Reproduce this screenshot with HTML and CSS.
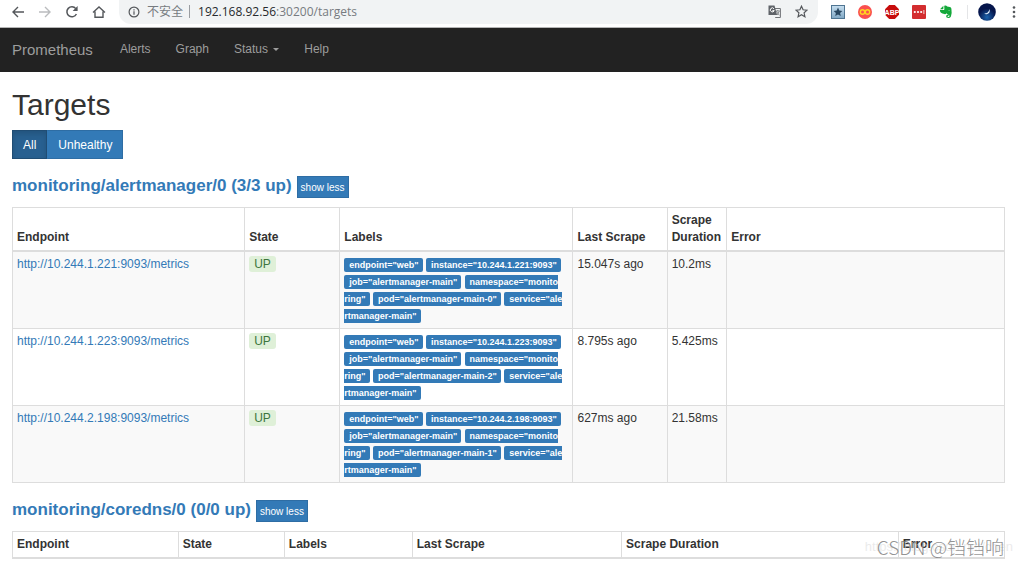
FILE: index.html
```html
<!DOCTYPE html>
<html lang="en">
<head>
<meta charset="utf-8">
<title>Prometheus Targets</title>
<link rel="stylesheet" href="styles.css">
</head>
<body>
<header class="browser">
  <div class="nav-buttons">
    <button class="icon-btn" aria-label="Back"><svg width="14" height="14" viewBox="0 0 14 14" fill="none" stroke="#54575b" stroke-width="1.4"><path d="M13 7H2M7 2L2 7l5 5"/></svg></button>
    <button class="icon-btn" aria-label="Forward"><svg width="14" height="14" viewBox="0 0 14 14" fill="none" stroke="#babcbe" stroke-width="1.4"><path d="M1 7h11M7 2l5 5-5 5"/></svg></button>
    <button class="icon-btn" aria-label="Reload"><svg width="14" height="14" viewBox="0 0 14 14"><path d="M11.4 9A5 5 0 1 1 10.8 3.6" fill="none" stroke="#54575b" stroke-width="1.5"/><path d="M12.6 1v5H7.6z" fill="#54575b"/></svg></button>
    <button class="icon-btn" aria-label="Home"><svg width="14" height="14" viewBox="0 0 14 14" fill="none" stroke="#54575b" stroke-width="1.4"><path d="M1 7.4L7 2l6 5.4M3 6.4v5.9h8V6.4"/></svg></button>
  </div>
  <div class="address">
    <svg width="12" height="12" viewBox="0 0 12 12"><circle cx="6" cy="6" r="4.9" fill="none" stroke="#54575b" stroke-width="1.2"/><path d="M6 5.3v3.4M6 3.2v1.2" stroke="#54575b" stroke-width="1.2"/></svg>
    <span class="insecure">不安全</span>
    <span class="bar"></span>
    <span class="url"><b>192.168.92.56</b>:30200/targets</span>
    <button class="icon-btn" aria-label="Translate"><svg width="13" height="13" viewBox="0 0 13 13"><path d="M5 3.5h7.4v9H7.2" fill="none" stroke="#707377" stroke-width="1"/><path d="M.5.5h6l2.6 9.4H.5z" fill="#5f6368"/><path d="M6 3.8A2 2 0 1 0 6.2 5.6H4.4" fill="none" stroke="#fff"/><path d="M7.8 6h4M9.8 5v1M8.3 6.3l3 4M11.2 6.3l-2 3.7" fill="none" stroke="#707377" stroke-width=".8"/></svg></button>
    <button class="icon-btn" aria-label="Bookmark"><svg width="13" height="13" viewBox="0 0 13 13"><path d="M6.5 1.2l1.6 3.6 3.9.4-2.9 2.6.8 3.9-3.4-2-3.4 2 .8-3.9L1 5.2l3.9-.4z" fill="none" stroke="#54575b" stroke-width="1.2"/></svg></button>
  </div>
  <div class="extensions">
    <svg width="14" height="14" viewBox="0 0 14 14"><defs><linearGradient id="sky" x2="0" y2="1"><stop stop-color="#c7dff0"/><stop offset="1" stop-color="#7fa7c4"/></linearGradient></defs><rect x=".5" y=".5" width="13" height="13" fill="url(#sky)" stroke="#4f7592"/><path d="M7 2.6l1.3 3 3.1.3-2.3 2.1.7 3.1L7 9.5l-2.8 1.6.7-3.1-2.3-2.1 3.1-.3z" fill="#284761"/></svg>
    <svg width="14" height="14" viewBox="0 0 14 14"><circle cx="7" cy="7" r="7" fill="#fa4f4f"/><g fill="none" stroke="#ffd321" stroke-width="1.4"><circle cx="4.5" cy="7" r="2.2"/><circle cx="9.5" cy="7" r="2.2"/></g></svg>
    <svg width="14" height="14" viewBox="0 0 14 14"><path d="M4.2 0h5.6L14 4.2v5.6L9.8 14H4.2L0 9.8V4.2z" fill="#c70d0d"/><text x="7" y="9.5" text-anchor="middle" class="abp">ABP</text></svg>
    <svg width="14" height="14" viewBox="0 0 14 14"><rect width="14" height="14" rx="1" fill="#d32d2f"/><g fill="#fff"><circle cx="2.8" cy="7" r="1.1"/><circle cx="6" cy="7" r="1.1"/><circle cx="9.2" cy="7" r="1.1"/><path d="M11.5 5h.8v4h-.8z"/></g></svg>
    <svg width="14" height="14" viewBox="0 0 14 14"><path d="M4.4.8L1 4.200h2.600q.8 0 .8-.8z" fill="#14a83a"/><path d="M5.200.7q2-.6 3 .7l2.600.5q1.400.2 1.600 1.900.8 4.600-.5 7.800-.8 1.600-2.700 1.500-2.200-.2-2.100-2 .2-1.500 2.500-1.400v1.200q-1.100 0-1.100.5 0 .7 1.100.6 1.100-.2.900-1.300-.3-1-1.700-1L7.400 8.200Q7 9.300 5.400 9.100C2.400 8.800 1 7.600.9 5.100h3.300q1.200 0 1.200-1.200z" fill="#14a83a"/><path d="M9.200 5.600q1-.8 1.700.3z" fill="#fff"/></svg>
  </div>
  <div class="profile">
    <svg width="18" height="18" viewBox="0 0 18 18"><defs><radialGradient id="night" cy=".8"><stop stop-color="#1a63ad"/><stop offset="1" stop-color="#05154b"/></radialGradient></defs><circle cx="9" cy="9" r="8.8" fill="url(#night)"/><path d="M11.400 6q1.400 4.300-2.800 5.200-1.500.2-2.400-.6 4.300.2 5.200-4.600z" fill="#e8f4ff"/></svg>
    <button class="icon-btn" aria-label="Menu"><svg width="4" height="14" viewBox="0 0 4 14" fill="#54575b"><circle cx="2" cy="2.5" r="1.3"/><circle cx="2" cy="7" r="1.3"/><circle cx="2" cy="11.5" r="1.3"/></svg></button>
  </div>
</header>
<nav class="navbar">
  <a class="brand" href="#">Prometheus</a>
  <a href="#">Alerts</a>
  <a href="#">Graph</a>
  <a href="#">Status <span class="caret"></span></a>
  <a href="#">Help</a>
</nav>
<main class="content">
  <h1>Targets</h1>
  <div class="btn-group"><button class="btn active">All</button><button class="btn">Unhealthy</button></div>
  <section class="job">
    <h2><a href="#">monitoring/alertmanager/0 (3/3 up)</a> <button class="btn-xs">show less</button></h2>
    <table class="targets">
      <colgroup><col class="a-endpoint"><col class="a-state"><col class="a-labels"><col class="a-last"><col class="a-duration"><col></colgroup>
      <thead><tr><th>Endpoint</th><th>State</th><th>Labels</th><th>Last Scrape</th><th>Scrape Duration</th><th>Error</th></tr></thead>
      <tbody>
        <tr><td><a href="#">http://10.244.1.221:9093/metrics</a></td><td><span class="up">UP</span></td>
          <td class="labels"><span class="label">endpoint="web"</span> <span class="label">instance="10.244.1.221:9093"</span> <span class="label">job="alertmanager-main"</span> <span class="label">namespace="monito<wbr>ring"</span> <span class="label">pod="alertmanager-main-0"</span> <span class="label">service="ale<wbr>rtmanager-main"</span></td>
          <td>15.047s ago</td><td>10.2ms</td><td></td></tr>
        <tr><td><a href="#">http://10.244.1.223:9093/metrics</a></td><td><span class="up">UP</span></td>
          <td class="labels"><span class="label">endpoint="web"</span> <span class="label">instance="10.244.1.223:9093"</span> <span class="label">job="alertmanager-main"</span> <span class="label">namespace="monito<wbr>ring"</span> <span class="label">pod="alertmanager-main-2"</span> <span class="label">service="ale<wbr>rtmanager-main"</span></td>
          <td>8.795s ago</td><td>5.425ms</td><td></td></tr>
        <tr><td><a href="#">http://10.244.2.198:9093/metrics</a></td><td><span class="up">UP</span></td>
          <td class="labels"><span class="label">endpoint="web"</span> <span class="label">instance="10.244.2.198:9093"</span> <span class="label">job="alertmanager-main"</span> <span class="label">namespace="monito<wbr>ring"</span> <span class="label">pod="alertmanager-main-1"</span> <span class="label">service="ale<wbr>rtmanager-main"</span></td>
          <td>627ms ago</td><td>21.58ms</td><td></td></tr>
      </tbody>
    </table>
  </section>
  <section class="job">
    <h2><a href="#">monitoring/coredns/0 (0/0 up)</a> <button class="btn-xs">show less</button></h2>
    <table class="targets">
      <colgroup><col class="b-endpoint"><col class="b-state"><col class="b-labels"><col class="b-last"><col class="b-duration"><col></colgroup>
      <thead><tr><th>Endpoint</th><th>State</th><th>Labels</th><th>Last Scrape</th><th>Scrape Duration</th><th>Error</th></tr></thead>
    </table>
  </section>
</main>
<div class="watermark-url">https://blog.csdn.net/chen</div>
<div class="watermark">CSDN @铛铛响</div>
</body>
</html>
```
FILE: styles.css
```css
* { box-sizing: border-box; }
body {
  margin: 0;
  font: 12px/17px "Liberation Sans", Arial, "Noto Sans CJK SC", sans-serif;
  color: #333;
  background: #fff;
}
a { color: #337ab7; text-decoration: none; }
button { font-family: inherit; cursor: pointer; }
svg { display: block; flex: none; }

.browser {
  display: flex;
  align-items: center;
  height: 28px;
  padding: 0 2px 4px 11px;
  border-bottom: 1px solid #b5b5b5;
}
.icon-btn { padding: 0; border: 0; background: none; }
.nav-buttons { display: flex; gap: 13px; margin-right: 13px; }
.address {
  flex: 1;
  display: flex;
  align-items: center;
  height: 24px;
  padding: 0 10px 0 9px;
  border-radius: 0 0 12px 12px;
  background: #f1f3f4;
  color: #777b80;
}
.insecure { margin-left: 7px; padding-top: 2px; }
.bar { width: 1px; height: 13px; margin: 0 8px 0 6px; background: #9a9da1; }
.url { flex: 1; font: 12px/17px "Open Sans", "Noto Sans", sans-serif; }
.url b { font-weight: 400; color: #27292c; }
.address .icon-btn + .icon-btn { margin-left: 14px; }
.extensions {
  display: flex;
  gap: 13px;
  padding-right: 14px;
  margin: 0 10px 0 13px;
  border-right: 1px solid #e4e5e7;
}
.abp { font: bold 7px "Liberation Sans", Arial, sans-serif; fill: #fff; }
.profile { display: flex; align-items: center; gap: 16px; }

.navbar {
  display: flex;
  align-items: center;
  gap: 25px;
  height: 44px;
  padding: 0 12px;
  border-bottom: 1px solid #222;
  background: #222;
}
.navbar a { color: #9d9d9d; }
.navbar .brand { margin-right: 2px; font-size: 15px; }
.caret {
  display: inline-block;
  margin-left: 2px;
  vertical-align: middle;
  border: 3px solid transparent;
  border-top-color: currentColor;
  border-bottom: 0;
}

.content { padding: 16px 13px 0 12px; }
h1 { margin: 0 0 8px; font-size: 30px; line-height: 34px; font-weight: 400; }
.btn-group { display: flex; }
.btn {
  height: 29px;
  padding: 0 10px;
  border: 1px solid #2e6da4;
  background: #337ab7;
  color: #fff;
  font-size: 12px;
}
.btn + .btn { border-left-color: #337ab7; }
.btn.active { background: #286090; border-color: #204d74; box-shadow: inset 0 3px 5px #00000020; }
.job { margin-top: 17px; }
h2 { margin: 0 0 9px; font-size: 17px; line-height: 22px; display: flex; gap: 5px; }
h2 a { line-height: 20px; }
.btn-xs {
  height: 22px;
  padding: 0 3px;
  border: 1px solid #2e6da4;
  background: #337ab7;
  color: #fff;
  font-size: 10px;
}
.targets { width: 100%; table-layout: fixed; border-collapse: collapse; border: 1px solid #ddd; }
th, td { padding: 4px; border: 1px solid #ddd; text-align: left; vertical-align: top; }
th { vertical-align: bottom; border-bottom-width: 2px; }
tbody tr:nth-child(odd) { background: #f9f9f9; }
.a-endpoint { width: 23.4%; }
.a-state { width: 9.6%; }
.a-labels { width: 23.5%; }
.a-last { width: 9.5%; }
.a-duration { width: 6%; }
.b-endpoint { width: 16.7%; }
.b-state { width: 10.7%; }
.b-labels { width: 12.9%; }
.b-last { width: 21.1%; }
.b-duration { width: 27.9%; }
.up { padding: 1px 5px; border-radius: 3px; background: #dff0d8; color: #3c763d; }
.label {
  padding: 2px 4px 2px 5px;
  border-radius: 2px;
  background: #337ab7;
  color: #fff;
  font-size: 9px;
  line-height: 9px;
  font-weight: 700;
}
.watermark {
  position: absolute;
  right: 14px;
  top: 534px;
  font: 300 19px/25px "Noto Sans CJK SC", sans-serif;
  color: #777c;
}
.watermark-url { position: absolute; right: 5px; top: 538px; font-size: 13px; color: #ddd9; }
```
